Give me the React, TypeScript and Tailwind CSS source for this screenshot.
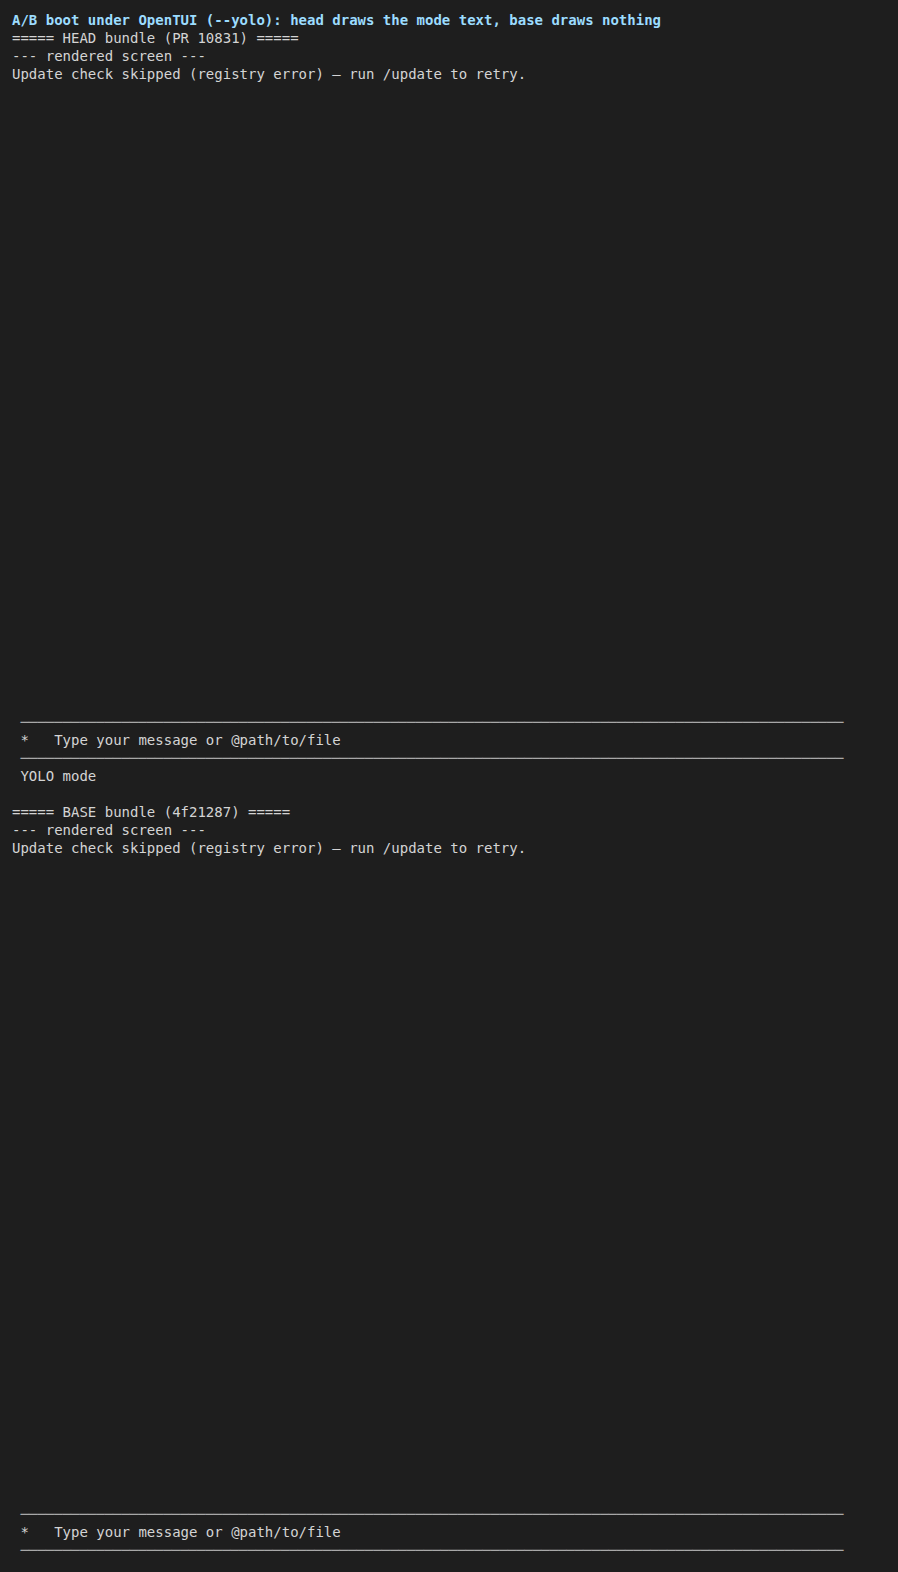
import React from 'react';

type Line = { text: string; kind?: 'title' | 'rule' };

const RULE = ' ' + '─'.repeat(98);

const blank = (n: number): Line[] => Array.from({ length: n }, () => ({ text: '' }));

const screen = (withMode: boolean): Line[] => [
  { text: '--- rendered screen ---' },
  { text: 'Update check skipped (registry error) — run /update to retry.' },
  ...blank(withMode ? 35 : 36),
  { text: RULE, kind: 'rule' },
  { text: ' *   Type your message or @path/to/file' },
  { text: RULE, kind: 'rule' },
  ...(withMode ? [{ text: ' YOLO mode' }, { text: '' }] : []),
];

const lines: Line[] = [
  { text: 'A/B boot under OpenTUI (--yolo): head draws the mode text, base draws nothing', kind: 'title' },
  { text: '===== HEAD bundle (PR 10831) =====' },
  ...screen(true),
  { text: '===== BASE bundle (4f21287) =====' },
  ...screen(false),
];

const App = () => {
  return (
    <div
      className="min-h-[1572px] bg-[#1e1e1e] pt-[11px] px-3 pb-3 text-[14px] leading-[18px] text-[#d4d4d4]"
      style={{ fontFamily: '"DejaVu Sans Mono", "Liberation Mono", monospace' }}
    >
      {lines.map((line, i) => (
        <div
          key={i}
          className={`h-[18px] whitespace-pre ${
            line.kind === 'title'
              ? 'font-bold text-[#9cdcfe]'
              : line.kind === 'rule'
              ? 'text-[#a8a8a8] tracking-[-0.03px]'
              : ''
          }`}
        >
          {line.text || ' '}
        </div>
      ))}
    </div>
  );
};

export default App;
